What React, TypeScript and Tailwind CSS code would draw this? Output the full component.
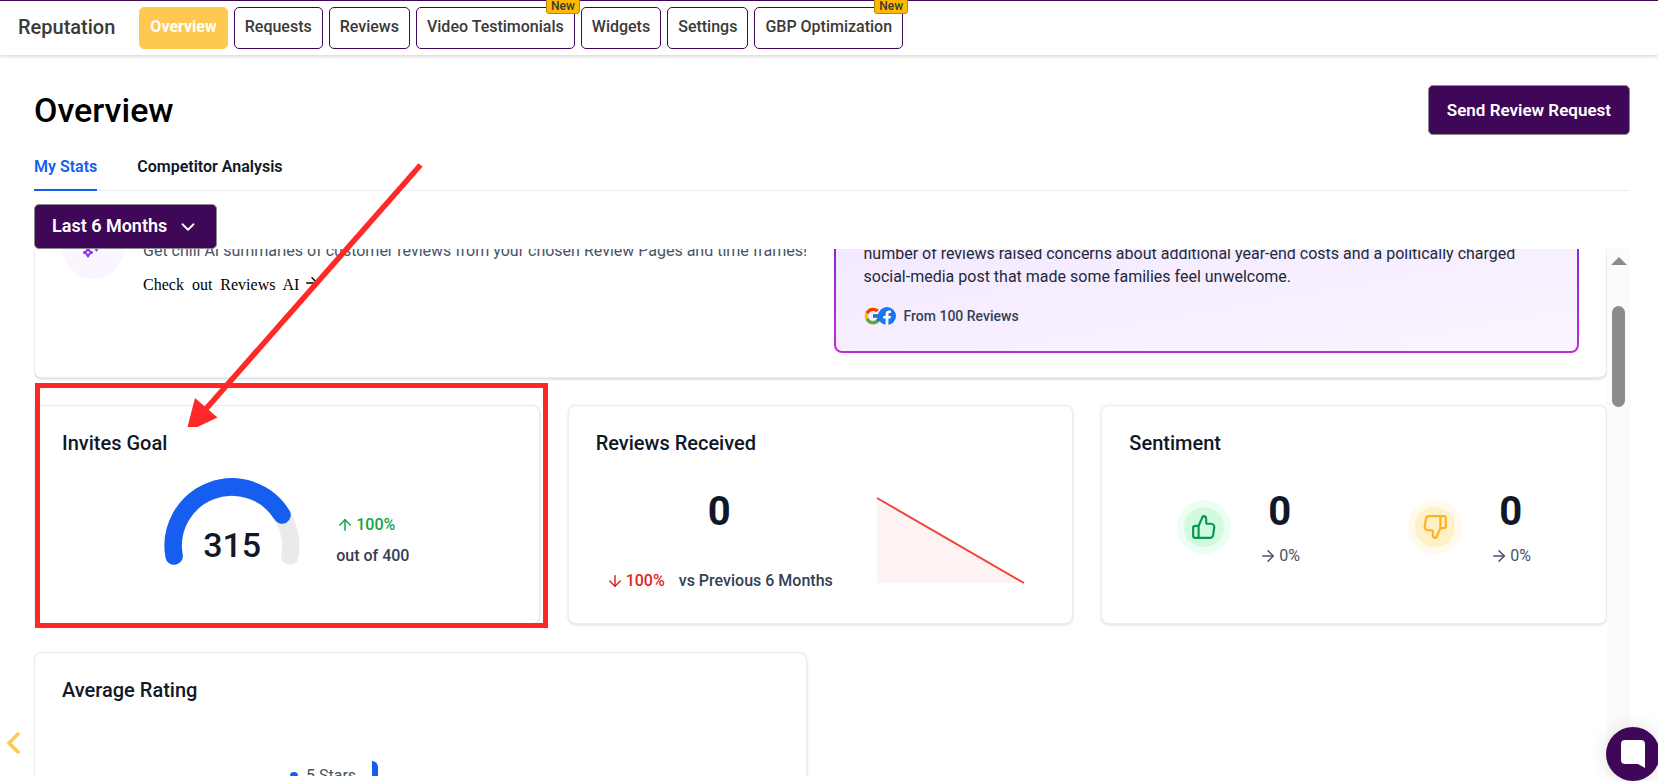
import type { ReactNode } from 'react';
import { ArrowDown, ArrowRight, ArrowUp, ChevronDown } from 'lucide-react';
import { FcGoogle } from 'react-icons/fc';

const navItems = [
  { label: 'Overview', active: true },
  { label: 'Requests' },
  { label: 'Reviews' },
  { label: 'Video Testimonials', isNew: true },
  { label: 'Widgets' },
  { label: 'Settings' },
  { label: 'GBP Optimization', isNew: true },
];

function Header() {
  return (
    <header className="flex h-[55px] shrink-0 items-start border-t border-[#3f0757] pl-[18px] shadow-[0_1px_4px_rgba(0,0,0,0.2)]">
      <span className="mt-3 mr-6 text-xl leading-7 font-medium text-[#3a3a3a]">Reputation</span>
      <nav className="mt-1.5 flex gap-1.5">
        {navItems.map((item) => (
          <a
            key={item.label}
            href="#"
            className={`relative rounded-[5px] border px-2.5 pt-[7px] pb-[9px] leading-6 whitespace-nowrap ${
              item.active
                ? 'border-[#ffc850] bg-[#ffc850] font-bold text-white'
                : 'border-[#3f0757] font-medium text-[#3a3a3a]'
            }`}
          >
            {item.label}
            {item.isNew && (
              <span className="absolute -top-2.5 -right-1.5 rounded-[3px] border border-[#b58a10] bg-[#ffb900] px-1 text-xs leading-[14px] font-medium text-[#3a3a3a]">
                New
              </span>
            )}
          </a>
        ))}
      </nav>
    </header>
  );
}

function Card({ title, children }: { title: string; children: ReactNode }) {
  return (
    <section className="h-[219px] rounded-lg border border-[#eaecf0] bg-white px-[27px] pt-[22px] shadow-[0_1px_3px_rgba(16,24,40,0.15)]">
      <h2 className="text-xl leading-[30px] font-medium text-[#101828]">{title}</h2>
      {children}
    </section>
  );
}

function SparklesIcon() {
  return (
    <svg width="28" height="28" viewBox="0 0 28 28" fill="none" stroke="#9333ea" strokeWidth="2" strokeLinejoin="round">
      <path d="M9 14.500l1.400 2.600 2.600 1.400-2.600 1.400L9 22.500l-1.400-2.600L5 18.500l2.600-1.400z" />
      <path d="M17.500 3l1.800 5.200 5.200 1.800-5.200 1.800-1.800 4.700-1.800-4.700-5.200-1.800 5.200-1.800z" />
    </svg>
  );
}

function FacebookIcon() {
  return (
    <svg width="18" height="18" viewBox="0 0 24 24" className="-ml-[5px]">
      <circle cx="12" cy="12" r="12" fill="#1877f2" />
      <path
        fill="#fff"
        d="M16.670 15.470l.53-3.470h-3.330V9.750c0-.95.470-1.880 1.960-1.880h1.510V4.920s-1.370-.24-2.690-.24c-2.740 0-4.530 1.660-4.530 4.670V12H7.080v3.470h3.040V24h3.750v-8.530z"
      />
    </svg>
  );
}

function ThumbIcon({ down }: { down?: boolean }) {
  return (
    <svg
      width="26"
      height="26"
      viewBox="0 0 24 24"
      fill="none"
      stroke="currentColor"
      strokeWidth="2"
      strokeLinecap="round"
      strokeLinejoin="round"
      className={down ? 'rotate-180' : ''}
    >
      <path d="M7 22V11M2 13v7a2 2 0 0 0 2 2h13.430a3 3 0 0 0 2.960-2.540l1.080-7A3 3 0 0 0 18.500 9H15a1 1 0 0 1-1-1V4.470A2.470 2.470 0 0 0 11.530 2a.82.82 0 0 0-.75.490l-3.520 7.920a1 1 0 0 1-.91.590H4a2 2 0 0 0-2 2z" />
    </svg>
  );
}

function ReviewsAi() {
  return (
    <section className="-mt-[61px] grid grid-cols-2 gap-[26px] rounded-lg border border-[#eaecf0] bg-white px-[27px] pt-7 pb-6 shadow-[0_1px_3px_rgba(16,24,40,0.2)]">
      <div className="flex gap-[19px]">
        <div className="flex size-[62px] shrink-0 items-center justify-center rounded-full bg-[#faf5ff]">
          <SparklesIcon />
        </div>
        <div className="pt-[22px]">
          <p className="leading-6 whitespace-nowrap text-[#475467]">
            Get chill AI summaries of customer reviews from your chosen Review Pages and time frames!
          </p>
          <a href="#" className="mt-2.5 flex items-center gap-1 font-['Liberation_Serif',serif] leading-6 text-black">
            <span className="whitespace-pre">Check  out  Reviews  AI</span>
            <ArrowRight size={18} className="mb-1" />
          </a>
        </div>
      </div>
      <div className="rounded-lg bg-linear-to-b from-[#7e22ce] to-[#c02bd8] p-0.5">
        <div className="h-full rounded-md bg-linear-to-br from-[#f3e8ff] to-[#faf5ff] px-7 pt-[23px] pb-[25px]">
          <p className="leading-[23px] text-[#1d2939]">
            number of reviews raised concerns about additional year-end costs and a politically charged social-media
            post that made some families feel unwelcome.
          </p>
          <div className="mt-[18px] flex h-5 items-center text-sm font-medium text-[#344054]">
            <FcGoogle size={20} className="-ml-px" />
            <FacebookIcon />
            <span className="ml-2">From 100 Reviews</span>
          </div>
        </div>
      </div>
    </section>
  );
}

function InvitesGoal() {
  return (
    <Card title="Invites Goal">
      <div className="mt-5 flex justify-center gap-9">
        <div className="relative w-[136px]">
          <svg width="136" height="90" viewBox="0 0 136 90" fill="none" strokeWidth="17.500" strokeLinecap="round">
            <path d="M10.100 78.100A58.750 58.750 0 1 1 125.900 78.100" stroke="#eaeaea" />
            <path d="M10.100 78.100A58.750 58.750 0 0 1 118 37" stroke="#155eef" />
          </svg>
          <span className="absolute inset-x-0 bottom-[3px] text-center text-[34px] leading-10 font-medium text-[#101828]">
            315
          </span>
        </div>
        <div className="pt-[35px] font-medium">
          <p className="flex items-center gap-0.5 leading-6 text-[#16a34a]">
            <ArrowUp size={18} />
            100%
          </p>
          <p className="mt-[7px] leading-6 text-[#344054]">out of 400</p>
        </div>
      </div>
    </Card>
  );
}

function ReviewsReceived() {
  return (
    <Card title="Reviews Received">
      <div className="mt-[30px] flex gap-[43px] pl-2.5">
        <div className="flex flex-col items-center">
          <span className="text-[40px] leading-12 font-bold text-[#101828]">0</span>
          <p className="mt-[33px] flex items-center leading-6 font-medium whitespace-nowrap text-[#344054]">
            <span className="mr-3.5 flex items-center gap-0.5 text-[#dc2626]">
              <ArrowDown size={18} />
              100%
            </span>
            vs Previous 6 Months
          </p>
        </div>
        <svg width="150" height="88" viewBox="0 0 150 88" className="mt-[9px]">
          <path d="M1 1v85h147z" fill="#fef2f2" />
          <path d="M1 1l147 85" stroke="#f04438" strokeWidth="2" />
        </svg>
      </div>
    </Card>
  );
}

function SentimentScore({ down }: { down?: boolean }) {
  return (
    <div className="flex gap-7">
      <div
        className={`mt-3 flex size-[54px] items-center justify-center rounded-full border-[7px] ${
          down ? 'border-[#fffaeb] bg-[#fef0c7] text-[#ffb020]' : 'border-[#ecfdf3] bg-[#d1fadf] text-[#039855]'
        }`}
      >
        <ThumbIcon down={down} />
      </div>
      <div className="flex flex-col items-center">
        <span className="text-[40px] leading-12 font-bold text-[#101828]">0</span>
        <p className="mt-2 flex items-center gap-0.5 leading-6 text-[#475467]">
          <ArrowRight size={18} />
          0%
        </p>
      </div>
    </div>
  );
}

function Annotation() {
  return (
    <svg className="pointer-events-none absolute top-0 left-0" width="560" height="640" viewBox="0 0 560 640">
      <rect x="37.500" y="385.500" width="508" height="240" fill="none" stroke="#ff2828" strokeWidth="5" />
      <path d="M420.500 165L205 410" stroke="#ff2828" strokeWidth="5.500" />
      <path d="M195 398l22.500 19.500-20 9.500H187.500z" fill="#ff2828" />
    </svg>
  );
}

export default function App() {
  return (
    <div className="relative flex h-screen flex-col overflow-hidden bg-white font-[Roboto,sans-serif] text-base text-[#101828]">
      <Header />

      <main className="flex min-h-0 flex-1 flex-col pt-[30px] pr-7 pb-[5px] pl-[34px]">
        <div className="flex items-center justify-between">
          <h1 className="text-[34px] leading-10 font-medium text-black">Overview</h1>
          <button className="h-[50px] rounded-[5px] border border-[#8a8a8a] bg-[#3f0757] px-[18px] pt-px text-[17px] font-semibold text-white">
            Send Review Request
          </button>
        </div>

        <div className="mt-5 flex gap-10 border-b border-[#eaecf5] font-semibold">
          <button className="-mb-px border-b-2 border-[#155eef] pb-2.5 leading-6 text-[#155eef]">My Stats</button>
          <button className="-mb-px border-b-2 border-transparent pb-2.5 leading-6">Competitor Analysis</button>
        </div>

        <div className="relative mt-[13px] self-start text-white">
          <select
            aria-label="Time period"
            className="block h-[45px] w-[183px] appearance-none rounded-[5px] border border-[#8a8a8a] bg-[#3f0757] pb-0.5 pl-[17px] text-lg font-semibold"
          >
            <option>Last 6 Months</option>
          </select>
          <ChevronDown size={22} className="pointer-events-none absolute top-3 right-[18px]" />
        </div>

        <div className="flex min-h-0 flex-1 overflow-hidden">
          <div className="min-w-0 flex-1">
            <ReviewsAi />
            <div className="mt-[27px] grid grid-cols-3 gap-7">
              <InvitesGoal />
              <ReviewsReceived />
              <Card title="Sentiment">
                <div className="mt-[30px] flex justify-between px-12">
                  <SentimentScore />
                  <SentimentScore down />
                </div>
              </Card>
            </div>
            <div className="mt-7 grid grid-cols-2 gap-7">
              <Card title="Average Rating">
                <div className="mt-[56px] flex pl-[228px] leading-6 text-[#475467]">
                  <span className="mt-[11px] mr-2 size-2 rounded-full bg-[#155eef]" />
                  <span className="mt-[3px]">5 Stars</span>
                  <span className="ml-4 h-10 w-1.5 rounded-tr-full bg-[#155eef]" />
                </div>
              </Card>
            </div>
          </div>
          <div className="flex w-[23px] shrink-0 flex-col items-center bg-[#fbfbfb] pt-2">
            <svg width="16" height="8" viewBox="0 0 16 8">
              <path d="M8 0l8 8H0z" fill="#8b8b8b" />
            </svg>
            <div className="mt-[41px] h-[101px] w-[13px] rounded-full bg-[#8b8b8b]" />
          </div>
        </div>
      </main>

      <Annotation />

      <button aria-label="Collapse sidebar" className="absolute bottom-[27px] left-1.5">
        <svg width="14" height="22" viewBox="0 0 14 22" fill="none" stroke="#ffc850" strokeWidth="3.500" strokeLinecap="round">
          <path d="M12 2l-9 9 9 9" />
        </svg>
      </button>

      <button
        aria-label="Open chat"
        className="absolute -right-0.5 bottom-0 flex size-[54px] items-center justify-center rounded-full bg-[#3f0757] shadow-[0_0_20px_rgba(0,0,0,0.12)]"
      >
        <svg width="24" height="28" viewBox="0 0 24 28" fill="#fff">
          <path d="M4 0h16a4 4 0 0 1 4 4v24l-7-4H4a4 4 0 0 1-4-4V4a4 4 0 0 1 4-4z" />
        </svg>
      </button>
    </div>
  );
}
